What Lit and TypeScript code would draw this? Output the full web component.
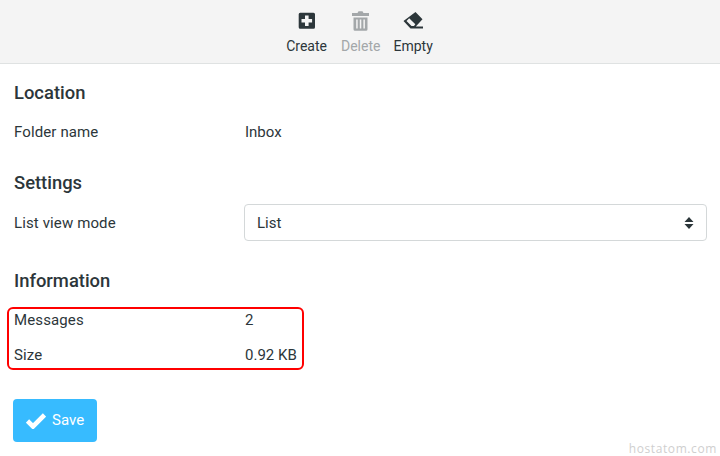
import { LitElement, html, css } from "lit";
import { customElement } from "lit/decorators.js";

@customElement("app-root")
export class AppRoot extends LitElement {
  static styles = css`
    :host {
      display: block;
      position: relative;
      width: 720px;
      height: 456px;
      overflow: hidden;
      background: #fff;
      font-family: Roboto, "Liberation Sans", sans-serif;
      font-size: 15px;
      color: #2c363a;
    }
    .toolbar {
      display: flex;
      justify-content: center;
      gap: 13px;
      height: 63px;
      padding-right: 1px;
      background: #f4f4f4;
      border-bottom: 1px solid #dfe2e2;
    }
    .tool {
      display: flex;
      flex-direction: column;
      align-items: center;
      padding-top: 11px;
      font-size: 14px;
      line-height: 16px;
      color: #2c363a;
    }
    .tool:first-child {
      margin-right: 1px;
    }
    .tool svg {
      display: block;
      width: 20px;
      height: 20px;
      margin-bottom: 7px;
    }
    .tool.off {
      color: #a3a7a9;
    }
    .content {
      padding: 0 13px 0 14px;
    }
    h2 {
      margin: 0;
      font-size: 18.4px;
      font-weight: 500;
      line-height: 22px;
      color: #2c363a;
    }
    .row {
      display: grid;
      grid-template-columns: 231px 1fr;
      align-items: center;
    }
    .label {
      letter-spacing: 0.12px;
    }
    .location {
      padding-top: 18px;
    }
    .location .row {
      height: 35px;
      margin-top: 10px;
    }
    .settings {
      padding-top: 23px;
    }
    .settings .row {
      margin-top: 10px;
    }
    .select {
      display: flex;
      align-items: center;
      justify-content: space-between;
      height: 35px;
      margin-left: -1px;
      padding: 0 12px;
      border: 1px solid #d4d8d9;
      border-radius: 4px;
    }
    .select svg {
      width: 10px;
      height: 14px;
    }
    .info {
      padding-top: 29px;
    }
    .marked {
      position: relative;
      margin-top: 10px;
    }
    .marked .row {
      height: 35px;
    }
    .marked::after {
      content: "";
      position: absolute;
      left: -7px;
      top: 5px;
      width: 293px;
      height: 59px;
      border: 2px solid #ff0000;
      border-radius: 6px;
    }
    .save {
      display: inline-flex;
      align-items: center;
      gap: 6px;
      height: 43px;
      margin: 27px 0 0 -1px;
      padding: 0 13px;
      background: #37bbff;
      border-radius: 4px;
      color: #fff;
      font-size: 15px;
      line-height: 41px;
    }
    .save svg {
      width: 20px;
      height: 16px;
    }
    .mark {
      position: absolute;
      right: 3px;
      bottom: 0;
      font-family: "Open Sans", sans-serif;
      font-size: 12px;
      line-height: 14px;
      letter-spacing: 0.6px;
      color: #cfcfcf;
    }
  `;

  render() {
    return html`
      <div class="toolbar">
        <div class="tool">
          <svg viewBox="0 0 20 20">
            <path
              fill="#2c363a"
              fill-rule="evenodd"
              d="M3.2 1.7H16.500a1.500 1.500 0 0 1 1.500 1.500V16.200a1.500 1.500 0 0 1-1.500 1.500H3.200a1.500 1.500 0 0 1-1.500-1.500V3.200a1.500 1.500 0 0 1 1.500-1.500zM8 4.400V7.900H4.500V11.500H8V15H11.600V11.500H15.100V7.900H11.600V4.400z"
            />
          </svg>
          Create
        </div>
        <div class="tool off">
          <svg viewBox="0 0 20 20">
            <path
              fill="#a3a7a9"
              fill-rule="evenodd"
              d="M6.500 2 7.500.2h4L12.500 2H18V5H1V2zM2.500 6.500h14V18.200a1.500 1.500 0 0 1-1.500 1.500H4a1.500 1.500 0 0 1-1.500-1.500zM5.200 8.500v9h1.500v-9zm3.600 0v9h1.500v-9zm3.600 0v9h1.500v-9z"
            />
          </svg>
          Delete
        </div>
        <div class="tool">
          <svg viewBox="0 0 20 20">
            <path
              fill="#2c363a"
              fill-rule="evenodd"
              d="M12.500 1 19.500 8.300 12.800 15.500H20V17.500H7.500L.5 10zM6.200 7.200 3.500 10 8.500 14.900H11L12.300 13.300z"
            />
          </svg>
          Empty
        </div>
      </div>

      <div class="content">
        <section class="location">
          <h2>Location</h2>
          <div class="row"><span class="label">Folder name</span><span>Inbox</span></div>
        </section>

        <section class="settings">
          <h2>Settings</h2>
          <div class="row">
            <span class="label">List view mode</span>
            <div class="select">
              <span>List</span>
              <svg viewBox="0 0 10 14">
                <path fill="#2c363a" d="M5 1l4.500 5H.5zM.5 8h9L5 13z" />
              </svg>
            </div>
          </div>
        </section>

        <section class="info">
          <h2>Information</h2>
          <div class="marked">
            <div class="row"><span class="label">Messages</span><span>2</span></div>
            <div class="row"><span class="label">Size</span><span>0.92 KB</span></div>
          </div>
        </section>

        <div class="save">
          <svg viewBox="0 0 20 16">
            <path fill="none" stroke="#fff" stroke-width="4.600" d="M1.500 8l5.500 5.500L18.500 2" />
          </svg>
          Save
        </div>
      </div>

      <div class="mark">hostatom.com</div>
    `;
  }
}
